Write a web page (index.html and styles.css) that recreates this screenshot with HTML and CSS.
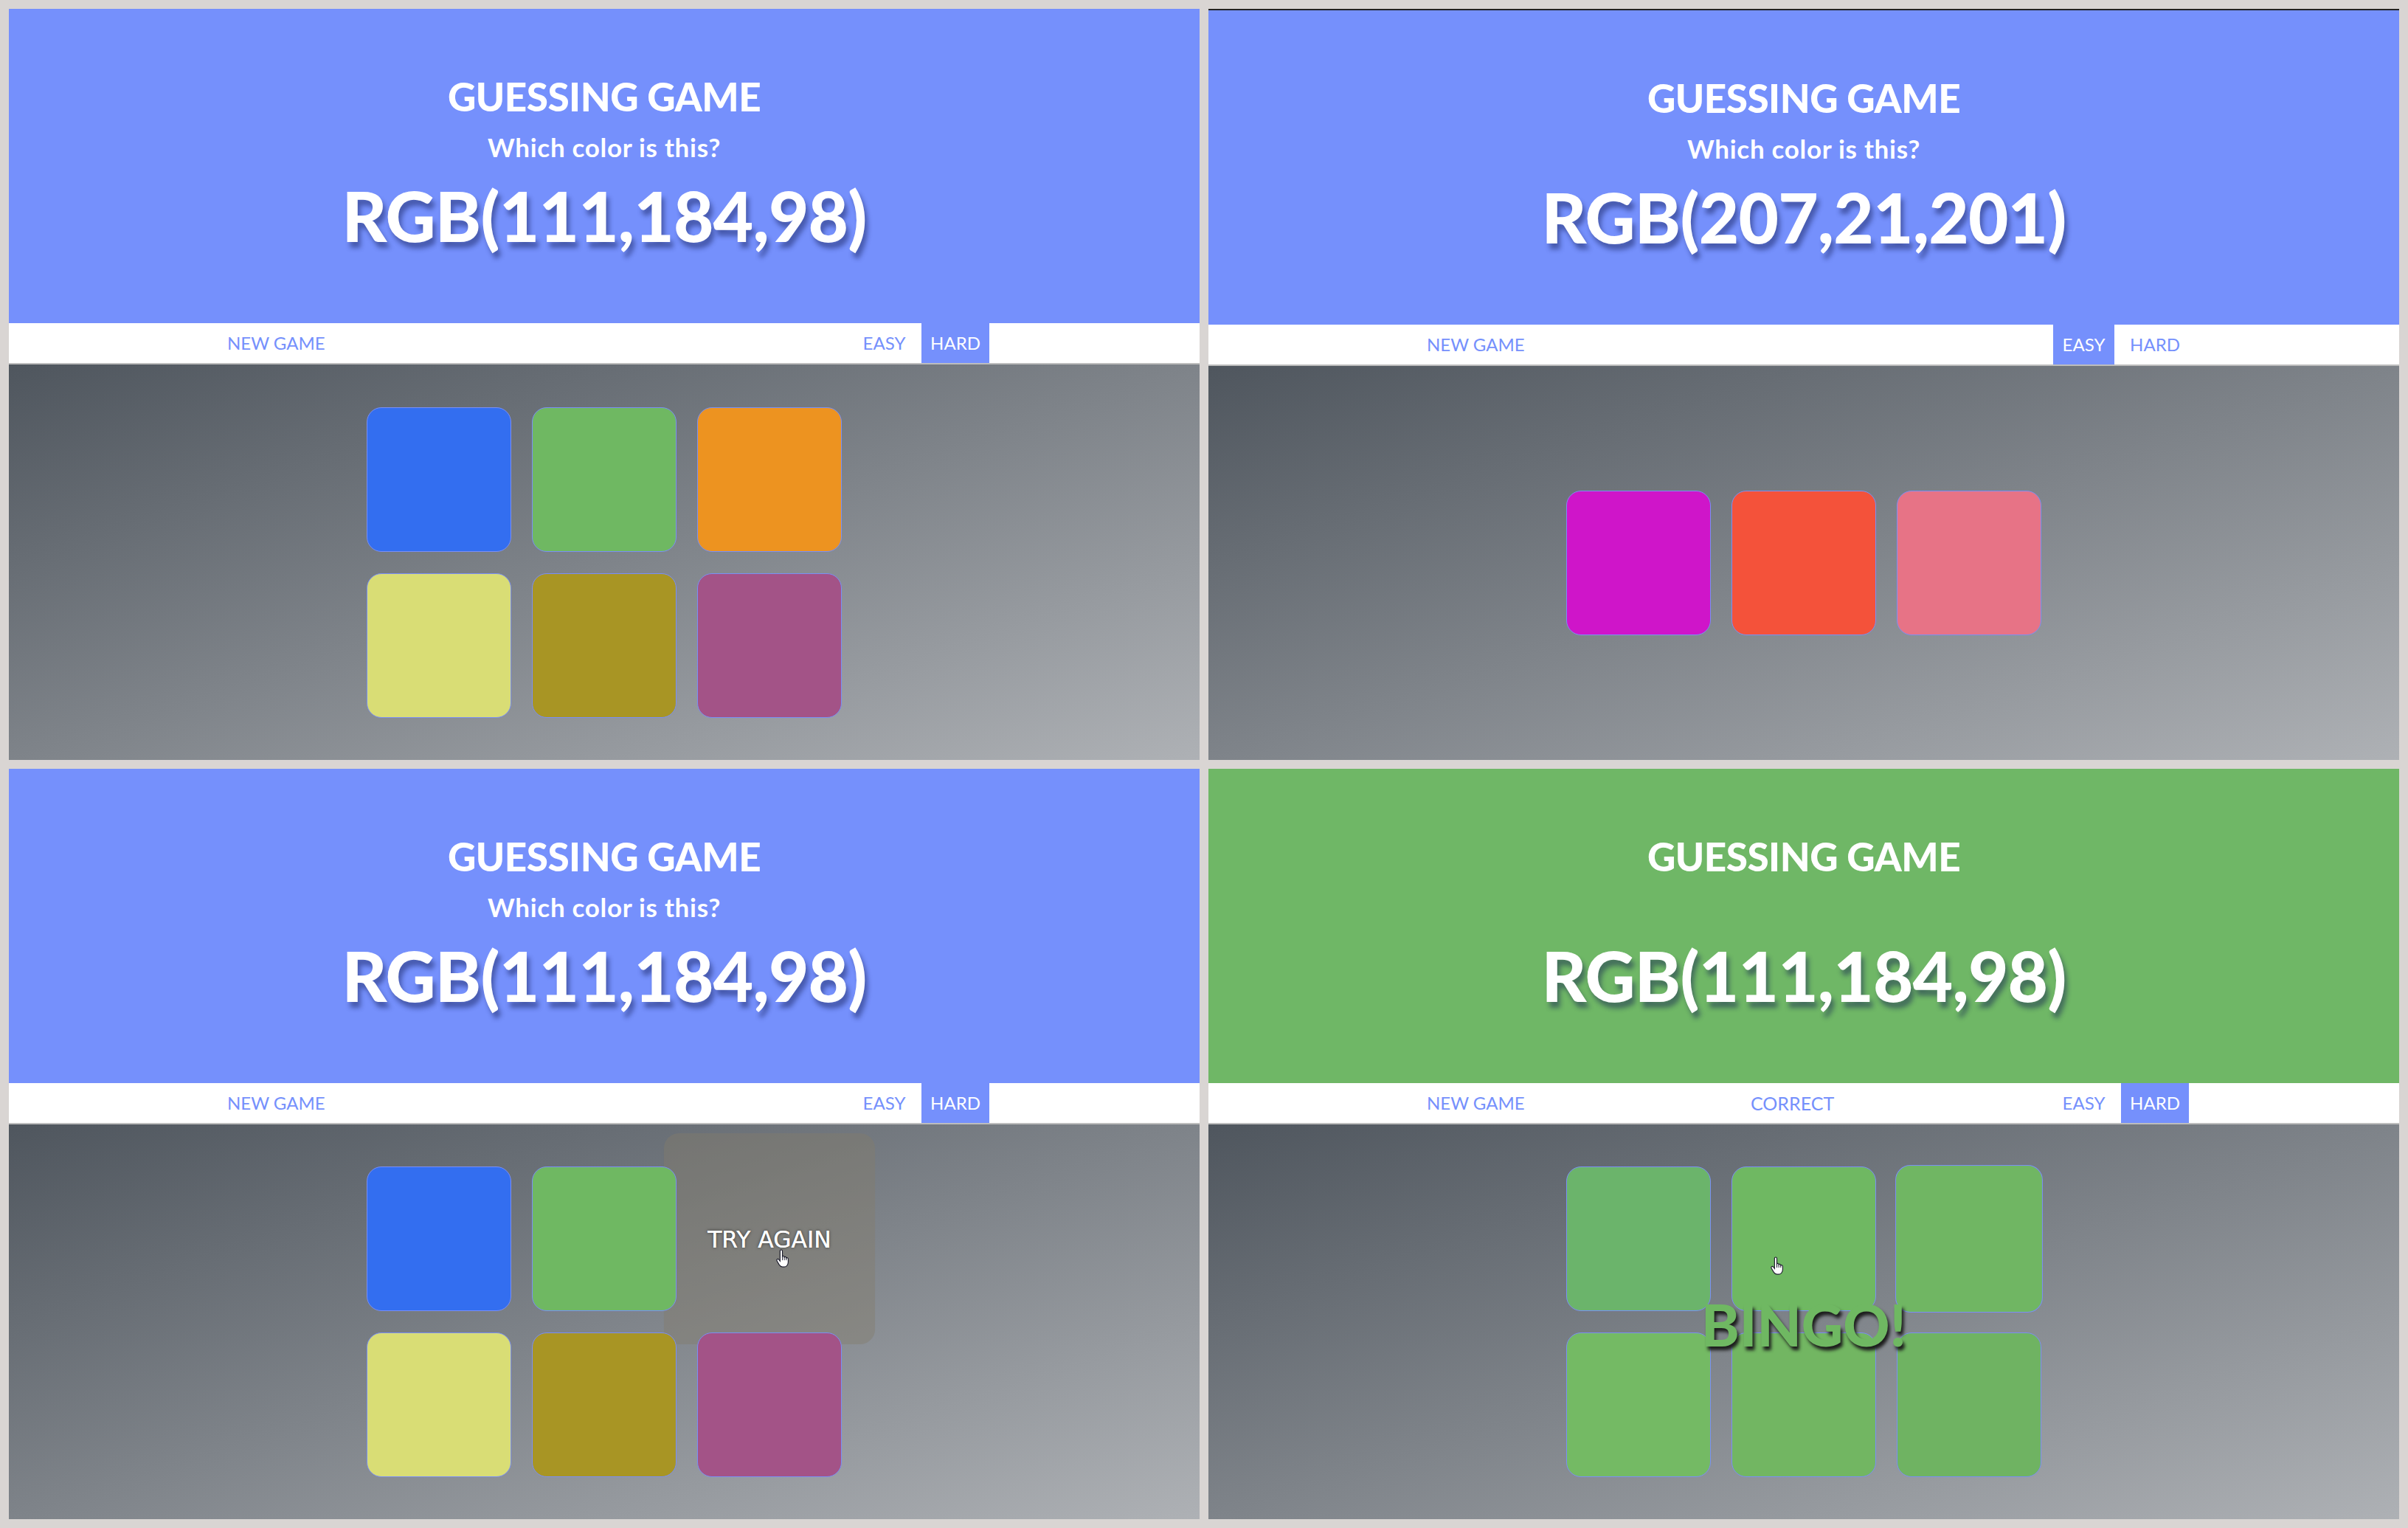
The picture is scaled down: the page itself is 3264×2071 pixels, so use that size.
FILE: index.html
```html
<!DOCTYPE html>
<html lang="en">
<head>
<meta charset="utf-8">
<title>Guessing Game</title>
<link rel="stylesheet" href="styles.css">
</head>
<body>
<div class="board">

  <section class="game">
    <header class="hero">
      <h1 class="title">GUESSING GAME</h1>
      <p class="prompt">Which color is this?</p>
      <p class="rgb">RGB(111,184,98)</p>
    </header>
    <nav class="bar">
      <span class="link">NEW GAME</span>
      <span class="msg"></span>
      <span class="modes"><span class="mode">EASY</span><span class="mode mode-hard active">HARD</span></span>
    </nav>
    <div class="field">
      <div class="grid">
        <div class="tile" style="background:#336ef0"></div>
        <div class="tile" style="background:#6fb862"></div>
        <div class="tile" style="background:#ed9320"></div>
        <div class="tile" style="background:#d9dd75"></div>
        <div class="tile" style="background:#a89524"></div>
        <div class="tile" style="background:#a35387"></div>
      </div>
    </div>
  </section>

  <section class="game">
    <header class="hero hero-bordered">
      <h1 class="title">GUESSING GAME</h1>
      <p class="prompt">Which color is this?</p>
      <p class="rgb">RGB(207,21,201)</p>
    </header>
    <nav class="bar">
      <span class="link">NEW GAME</span>
      <span class="msg"></span>
      <span class="modes"><span class="mode active">EASY</span><span class="mode mode-hard">HARD</span></span>
    </nav>
    <div class="field">
      <div class="grid">
        <div class="tile" style="background:#cf15c9"></div>
        <div class="tile" style="background:#f4523a"></div>
        <div class="tile" style="background:#e77386"></div>
      </div>
    </div>
  </section>

  <section class="game">
    <header class="hero">
      <h1 class="title">GUESSING GAME</h1>
      <p class="prompt">Which color is this?</p>
      <p class="rgb">RGB(111,184,98)</p>
    </header>
    <nav class="bar">
      <span class="link">NEW GAME</span>
      <span class="msg"></span>
      <span class="modes"><span class="mode">EASY</span><span class="mode mode-hard active">HARD</span></span>
    </nav>
    <div class="field">
      <div class="grid">
        <div class="tile" style="background:#336ef0"></div>
        <div class="tile" style="background:#6fb862"></div>
        <div class="tile miss">TRY AGAIN</div>
        <div class="tile" style="background:#d9dd75"></div>
        <div class="tile" style="background:#a89524"></div>
        <div class="tile" style="background:#a35387"></div>
      </div>
      <svg class="cursor cursor-a" viewBox="0 0 20 24" aria-hidden="true"><path d="M7 2.2C7 1.2 7.7 .6 8.5 .6S10 1.2 10 2.2V9.2C10.4 8.6 11 8.4 11.6 8.6 12.2 8.8 12.5 9.4 12.5 10 12.9 9.5 13.5 9.4 14 9.6 14.6 9.9 15 10.4 15 11.1 15.4 10.7 16 10.6 16.5 10.9 17.1 11.2 17.5 11.8 17.5 12.5V16.2C17.5 19.4 15.6 22.6 12.5 22.6H10.2C8.2 22.6 7 21.6 6 20L3 14.8C2.5 14 2.7 13 3.4 12.6 4.1 12.2 5 12.5 5.5 13.2L7 15.2Z" fill="#fff" stroke="#1a1a2a" stroke-width="1.1"/><path d="M10 9.5V14M12.5 10V14M15 11V14" stroke="#1a1a2a" stroke-width=".9" fill="none"/></svg>
    </div>
  </section>

  <section class="game">
    <header class="hero hero-win">
      <h1 class="title">GUESSING GAME</h1>
      <p class="prompt prompt-hidden">Which color is this?</p>
      <p class="rgb">RGB(111,184,98)</p>
    </header>
    <nav class="bar">
      <span class="link">NEW GAME</span>
      <span class="msg">CORRECT</span>
      <span class="modes"><span class="mode">EASY</span><span class="mode mode-hard active">HARD</span></span>
    </nav>
    <div class="field">
      <div class="grid">
        <div class="tile" style="background:#6bb46b"></div>
        <div class="tile" style="background:#6fb862"></div>
        <div class="tile tile-grow" style="background:#70b663"></div>
        <div class="tile" style="background:#74ba64"></div>
        <div class="tile" style="background:#72b662"></div>
        <div class="tile" style="background:#6fb362"></div>
      </div>
      <p class="bingo">BINGO!</p>
      <svg class="cursor cursor-b" viewBox="0 0 20 24" aria-hidden="true"><path d="M7 2.2C7 1.2 7.7 .6 8.5 .6S10 1.2 10 2.2V9.2C10.4 8.6 11 8.4 11.6 8.6 12.2 8.8 12.5 9.4 12.5 10 12.9 9.5 13.5 9.4 14 9.6 14.6 9.9 15 10.4 15 11.1 15.4 10.7 16 10.6 16.5 10.9 17.1 11.2 17.5 11.8 17.5 12.5V16.2C17.5 19.4 15.6 22.6 12.5 22.6H10.2C8.2 22.6 7 21.6 6 20L3 14.8C2.5 14 2.7 13 3.4 12.6 4.1 12.2 5 12.5 5.5 13.2L7 15.2Z" fill="#fff" stroke="#1a1a2a" stroke-width="1.1"/><path d="M10 9.5V14M12.5 10V14M15 11V14" stroke="#1a1a2a" stroke-width=".9" fill="none"/></svg>
    </div>
  </section>

</div>
</body>
</html>
```

FILE: styles.css
```css
html, body {
  margin: 0;
  padding: 0;
}

body {
  background: #d9d5d3;
  font-family: Lato, "Open Sans", "DejaVu Sans", sans-serif;
}

.board {
  display: grid;
  grid-template-columns: 1614px 1614px;
  grid-template-rows: 1018px 1017px;
  gap: 12px;
  padding: 12px;
}

.game {
  display: flex;
  flex-direction: column;
  overflow: hidden;
  background: #fff;
}

.hero {
  flex: none;
  box-sizing: border-box;
  height: 426px;
  padding-top: 92px;
  background: #7590fc;
  color: #fff;
  text-align: center;
}

.hero-bordered {
  height: 428px;
  border-top: 2px solid #222;
}

.hero-win {
  background: #6fb766;
}

.title {
  margin: 0;
  font-size: 53px;
  line-height: 53px;
  font-weight: 900;
  letter-spacing: -0.5px;
}

.prompt {
  margin: 25px 0 0;
  font-size: 35px;
  line-height: 34px;
  font-weight: 700;
  letter-spacing: 0.7px;
}

.prompt-hidden {
  visibility: hidden;
}

.rgb {
  margin: 30px 0 0;
  font-size: 94px;
  line-height: 92px;
  font-weight: 900;
  letter-spacing: -0.8px;
  text-shadow: 4px 8px 6px rgba(15, 25, 80, 0.45);
}

.bar {
  flex: none;
  height: 54px;
  display: grid;
  grid-template-columns: 439px 410px auto;
  padding-left: 296px;
  border-bottom: 2px solid #bdbdbd;
  background: #fff;
  color: #7590fc;
  font-size: 24px;
  line-height: 54px;
  white-space: nowrap;
}

.msg {
  font-size: 25px;
}

.modes {
  display: flex;
  gap: 9px;
}

.mode {
  width: 83px;
  text-align: center;
}

.mode-hard {
  width: 92px;
}

.mode.active {
  background: #7590fc;
  color: #fff;
}

.field {
  flex: 1;
  position: relative;
  display: flex;
  align-items: center;
  justify-content: center;
  background: linear-gradient(to bottom right, #4f565e, #aeb1b5);
}

.grid {
  position: relative;
  z-index: 0;
  display: grid;
  grid-template-columns: repeat(3, 196px);
  grid-auto-rows: 196px;
  gap: 29px 28px;
}

.tile {
  box-sizing: border-box;
  border: 1px solid #7a8ff5;
  border-radius: 20px;
}

.tile-grow {
  transform: scale(1.02);
}

.miss {
  position: relative;
  z-index: -1;
  transform: scale(1.46);
  border: none;
  border-radius: 14px;
  background: rgba(130, 123, 108, 0.42);
  display: flex;
  align-items: center;
  justify-content: center;
  color: #fff;
  font-family: "DejaVu Sans", Verdana, sans-serif;
  font-size: 21.5px;
  text-shadow: 0 0 0.4px #fff, 0 0 3px rgba(0, 0, 0, 0.55);
}

.bingo {
  position: absolute;
  left: 50%;
  top: 50%;
  margin: 0;
  transform: translate(-50%, -46%);
  color: #6fb862;
  font-size: 78px;
  line-height: 1;
  font-weight: 900;
  text-shadow: 3px 5px 4px #1d1d1d;
  z-index: 3;
}

.cursor {
  position: absolute;
  width: 21px;
  height: 26px;
  z-index: 5;
}

.cursor-a {
  left: 1038px;
  top: 169px;
}

.cursor-b {
  left: 760px;
  top: 179px;
}
```
